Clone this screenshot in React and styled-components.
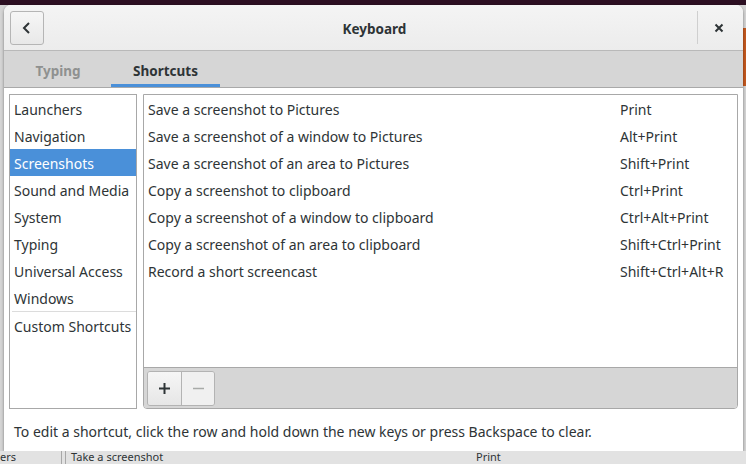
import React, { useState } from 'react';
import styled, { createGlobalStyle } from 'styled-components';

const Global = createGlobalStyle`
    html, body {
        margin: 0;
        padding: 0;
        width: 746px;
        height: 464px;
        overflow: hidden;
    }
    body {
        font-family: "Noto Sans", "Open Sans", sans-serif;
        font-size: 14px;
        color: #2e3436;
    }
`

const categories = [
    'Launchers',
    'Navigation',
    'Screenshots',
    'Sound and Media',
    'System',
    'Typing',
    'Universal Access',
    'Windows',
];

const shortcuts = [
    ['Save a screenshot to Pictures', 'Print'],
    ['Save a screenshot of a window to Pictures', 'Alt+Print'],
    ['Save a screenshot of an area to Pictures', 'Shift+Print'],
    ['Copy a screenshot to clipboard', 'Ctrl+Print'],
    ['Copy a screenshot of a window to clipboard', 'Ctrl+Alt+Print'],
    ['Copy a screenshot of an area to clipboard', 'Shift+Ctrl+Print'],
    ['Record a short screencast', 'Shift+Ctrl+Alt+R'],
];

// desktop behind the dialog (purple top bar, some other window peeking out)
const Desktop = styled.div`
    width: 746px;
    height: 464px;
    box-sizing: border-box;
    padding: 5px 3px 0 4px;
    display: flex;
    flex-direction: column;
    background:
        linear-gradient(#2c0f22, #2c0f22) top / 100% 5px no-repeat,
        linear-gradient(#c4581e, #c4581e) 743px 28px / 3px 58px no-repeat,
        #d4d4d4;
`

const Window = styled.div`
    width: 739px;
    height: 446px;
    flex: none;
    display: flex;
    flex-direction: column;
    background: #ffffff;
    border-radius: 7px 7px 0 0;
    box-shadow: 0 1px 3px rgba(0, 0, 0, 0.45);
    overflow: hidden;
`

const HeaderBar = styled.div`
    height: 45px;
    flex: none;
    display: flex;
    align-items: center;
    padding: 0 6px;
    background: linear-gradient(#f4f4f4, #ececec);
    border-bottom: 1px solid #b9b9b9;
`

const BackButton = styled.button`
    width: 34px;
    height: 34px;
    padding: 0;
    display: flex;
    align-items: center;
    justify-content: center;
    border: 1px solid #b5b5b5;
    border-radius: 3px;
    background: linear-gradient(#f6f6f6, #e8e8e8);
`

const Title = styled.div`
    flex: 1;
    text-align: center;
    font-weight: bold;
    font-size: 13.5px;
    color: #2e3436;
    padding: 2px 0 0 8px;
`

const CloseArea = styled.div`
    height: 33px;
    width: 42px;
    display: flex;
    align-items: center;
    justify-content: center;
    border-left: 1px solid #cfcfcf;
    margin-right: -3px;
`

const TabBar = styled.div`
    height: 36px;
    flex: none;
    display: flex;
    gap: 6px;
    padding-left: 7px;
    background: #d6d6d6;
    border-bottom: 1px solid #a9a9a9;
`

const Tab = styled.div`
    width: ${p => p.$w}px;
    display: flex;
    align-items: center;
    justify-content: center;
    padding-top: 3px;
    font-weight: bold;
    font-size: 13.5px;
    color: ${p => p.$active ? '#2e3436' : '#8f9190'};
    box-shadow: ${p => p.$active ? 'inset 0 -3px 0 #4a90d9' : 'none'};
`

const Body = styled.div`
    flex: 1;
    display: flex;
    gap: 6px;
    padding: 6px 5px 0 5px;
`

const CategoryList = styled.div`
    width: 128px;
    height: 315px;
    box-sizing: border-box;
    border: 1px solid #a8a8a8;
    background: #fff;
    display: flex;
    flex-direction: column;
`

const Category = styled.div`
    height: 27px;
    box-sizing: border-box;
    flex: none;
    display: flex;
    align-items: center;
    padding: 2px 0 0 4px;
    background: ${p => p.$selected ? '#4a90d9' : 'transparent'};
    color: ${p => p.$selected ? '#ffffff' : '#2e3436'};
    white-space: nowrap;
`

const Separator = styled.div`
    height: 1px;
    margin: 0 0 0 2px;
    background: #dcdcdc;
`

const ShortcutPanel = styled.div`
    flex: 1;
    height: 315px;
    box-sizing: border-box;
    border: 1px solid #a8a8a8;
    border-radius: 0 0 4px 4px;
    display: flex;
    flex-direction: column;
    overflow: hidden;
`

const Rows = styled.div`
    flex: 1;
    background: #fff;
`

const Row = styled.div`
    height: 27px;
    box-sizing: border-box;
    display: grid;
    grid-template-columns: 472px 1fr;
    align-items: center;
    padding: 2px 0 0 4px;
    white-space: nowrap;
`

const Toolbar = styled.div`
    height: 40px;
    flex: none;
    display: flex;
    align-items: center;
    padding-left: 3px;
    background: #d6d6d6;
    border-top: 1px solid #a8a8a8;
`

const ButtonGroup = styled.div`
    display: flex;
    height: 33px;
    border: 1px solid #b3b3b3;
    border-radius: 3px;
    overflow: hidden;
`

const ToolButton = styled.button`
    width: 33px;
    height: 100%;
    padding: 0;
    border: none;
    border-left: ${p => p.$first ? 'none' : '1px solid #b3b3b3'};
    background: ${p => p.$disabled ? '#f0f0f0' : 'linear-gradient(#f6f6f6, #e6e6e6)'};
    display: flex;
    align-items: center;
    justify-content: center;
`

const Footer = styled.div`
    height: 42px;
    flex: none;
    display: flex;
    align-items: center;
    padding-left: 10px;
    padding-top: 3px;
    box-sizing: border-box;
    white-space: nowrap;
`

// the window underneath the dialog, just its first row shows
const BehindRow = styled.div`
    flex: 1;
    display: flex;
    align-items: flex-start;
    margin: 0 -3px 0 -4px;
    background: #e2e2e2;
    color: #2e3436;
    font-size: 11px;
    line-height: 12px;
`

const BehindCell = styled.div`
    width: ${p => p.$w}px;
    flex: none;
    padding-left: ${p => p.$pad || 0}px;
    box-sizing: border-box;
    border-right: ${p => p.$line ? '1px solid #a8a8a8' : 'none'};
    height: 13px;
    white-space: nowrap;
`

function App() {
    const [selected, setSelected] = useState('Screenshots');

    return (
        <Desktop>
            <Global />
            <Window>
                <HeaderBar>
                    <BackButton>
                        <svg width="16" height="16" viewBox="0 0 16 16">
                            <path d="M10 3 L5 8 L10 13" fill="none" stroke="#2e3436" strokeWidth="2" />
                        </svg>
                    </BackButton>
                    <Title>Keyboard</Title>
                    <CloseArea>
                        <svg width="10" height="10" viewBox="0 0 10 10">
                            <path d="M1.5 1.5 L8.5 8.5 M8.5 1.5 L1.5 8.5" stroke="#2e3436" strokeWidth="2" />
                        </svg>
                    </CloseArea>
                </HeaderBar>

                <TabBar>
                    <Tab $w={94}>Typing</Tab>
                    <Tab $w={109} $active>Shortcuts</Tab>
                </TabBar>

                <Body>
                    <CategoryList>
                        {categories.map(c =>
                            <Category key={c} $selected={c === selected} onClick={() => setSelected(c)}>{c}</Category>
                        )}
                        <Separator />
                        <Category>Custom Shortcuts</Category>
                    </CategoryList>

                    <ShortcutPanel>
                        <Rows>
                            {shortcuts.map(([name, accel]) =>
                                <Row key={name}>
                                    <span>{name}</span>
                                    <span>{accel}</span>
                                </Row>
                            )}
                        </Rows>
                        <Toolbar>
                            <ButtonGroup>
                                <ToolButton $first>
                                    <svg width="11" height="11" viewBox="0 0 11 11">
                                        <path d="M5.5 0 V11 M0 5.5 H11" stroke="#2e3436" strokeWidth="2" />
                                    </svg>
                                </ToolButton>
                                <ToolButton $disabled>
                                    <svg width="11" height="11" viewBox="0 0 11 11">
                                        <path d="M0 5.5 H11" stroke="#a8aaa8" strokeWidth="1.5" />
                                    </svg>
                                </ToolButton>
                            </ButtonGroup>
                        </Toolbar>
                    </ShortcutPanel>
                </Body>

                <Footer>
                    To edit a shortcut, click the row and hold down the new keys or press Backspace to clear.
                </Footer>
            </Window>
            <BehindRow>
                <BehindCell $w={62} $line>ers</BehindCell>
                <BehindCell $w={4} $line />
                <BehindCell $w={410} $pad={5}>Take a screenshot</BehindCell>
                <BehindCell $w={170}>Print</BehindCell>
            </BehindRow>
        </Desktop>
    );
}

export default App;
